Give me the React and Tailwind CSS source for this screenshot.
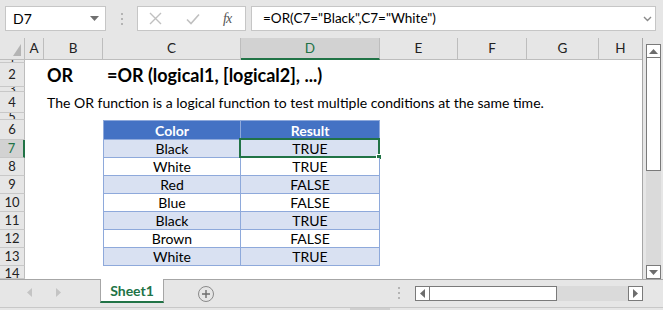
import React from 'react'

const font = { fontFamily: 'Lato, "Liberation Sans", sans-serif' }

const cols = [
  { k: 'A', w: 'w-[19px]' },
  { k: 'B', w: 'w-[59px]' },
  { k: 'C', w: 'w-[138px]' },
  { k: 'D', w: 'w-[139px]' },
  { k: 'E', w: 'w-[78px]' },
  { k: 'F', w: 'w-[69px]' },
  { k: 'G', w: 'w-[72px]' },
  { k: 'H', w: 'flex-1' },
]

const data = [
  ['Black', 'TRUE'],
  ['White', 'TRUE'],
  ['Red', 'FALSE'],
  ['Blue', 'FALSE'],
  ['Black', 'TRUE'],
  ['Brown', 'FALSE'],
  ['White', 'TRUE'],
]

const RowHead = ({ n, h, active, top }) => (
  <div
    className={
      'w-[25px] shrink-0 overflow-hidden flex justify-center border-b border-[#c8c8c8] text-[13px] leading-[15px] ' +
      h + ' ' +
      (top ? 'items-start ' : 'items-center ') +
      (active
        ? 'bg-[#d2d2d2] border-r-2 border-r-[#217346] text-[#217346]'
        : 'bg-[#e6e6e6] border-r border-r-[#bdbdbd] text-[#222]')
    }
  >
    {n}
  </div>
)

const TriUp = () => (
  <svg width="9" height="5" viewBox="0 0 9 5"><path d="M0 5 L4.5 0 L9 5 Z" fill="#6d6d6d" /></svg>
)
const TriDown = () => (
  <svg width="9" height="5" viewBox="0 0 9 5"><path d="M0 0 L4.5 5 L9 0 Z" fill="#6d6d6d" /></svg>
)
const TriLeft = ({ c = '#6d6d6d' }) => (
  <svg width="5" height="9" viewBox="0 0 5 9"><path d="M5 0 L0 4.5 L5 9 Z" fill={c} /></svg>
)
const TriRight = ({ c = '#6d6d6d' }) => (
  <svg width="5" height="9" viewBox="0 0 5 9"><path d="M0 0 L5 4.5 L0 9 Z" fill={c} /></svg>
)

const Dots = () => (
  <div className="flex flex-col gap-[3px]">
    <div className="w-[2px] h-[2px] bg-[#b4b4b4]" />
    <div className="w-[2px] h-[2px] bg-[#b4b4b4]" />
    <div className="w-[2px] h-[2px] bg-[#b4b4b4]" />
  </div>
)

export default function App() {
  return (
    <div className="w-[663px] h-[310px] bg-[#e6e6e6] overflow-hidden text-black" style={font}>
      {/* formula bar */}
      <div className="h-[38px] flex items-start pt-[6px] pl-[5px]">
        <div className="w-[101px] h-[25px] bg-white border border-[#c6c6c6] flex items-center justify-between pl-[7px] pr-[6px]">
          <span className="text-[14px]">D7</span>
          <svg width="9" height="5" viewBox="0 0 9 5"><path d="M0 0 L4.5 5 L9 0 Z" fill="#707070" /></svg>
        </div>
        <div className="w-[31px] h-[25px] flex items-center justify-center">
          <Dots />
        </div>
        <div className="w-[109px] h-[25px] bg-white border border-[#c6c6c6] flex items-center pl-[11px]">
          <svg width="13" height="13" viewBox="0 0 13 13" className="mr-[24px]">
            <path d="M1 1 L12 12 M12 1 L1 12" stroke="#c0c0c0" strokeWidth="1.4" />
          </svg>
          <svg width="14" height="12" viewBox="0 0 14 12" className="mr-[23px]">
            <path d="M1 6.5 L5 10.5 L13 1.5" stroke="#c0c0c0" strokeWidth="1.6" fill="none" />
          </svg>
          <span className="text-[14px] italic text-[#555] tracking-[-1px]" style={{ fontFamily: '"Liberation Serif", serif' }}>fx</span>
        </div>
        <div className="ml-[5px] w-[405px] h-[25px] bg-white border border-[#c6c6c6] flex items-center justify-between pl-[11px] pr-[3px]">
          <span className="text-[13.5px] whitespace-nowrap">=OR(C7="Black",C7="White")</span>
          <svg width="9" height="6" viewBox="0 0 9 6"><path d="M1 1 L4.5 4.5 L8 1" stroke="#8a8a8a" strokeWidth="1.4" fill="none" /></svg>
        </div>
      </div>

      {/* sheet + vertical scrollbar */}
      <div className="h-[241px] flex">
        <div className="w-[643px] flex flex-col border-r border-[#a6a6a6] bg-white">
          {/* column headers */}
          <div className="h-[22px] flex bg-[#e6e6e6] text-[13.5px] text-[#222]">
            <div className="w-[25px] shrink-0 border-r border-b border-[#bdbdbd] relative">
              <svg width="8" height="12" viewBox="0 0 8 12" className="absolute right-[3px] bottom-[3px]">
                <path d="M8 0 L8 12 L0 12 Z" fill="#b4b4b4" />
              </svg>
            </div>
            {cols.map((c) => (
              <div
                key={c.k}
                className={
                  'shrink-0 flex items-center justify-center ' + c.w + ' ' +
                  (c.k === 'D'
                    ? 'bg-[#d2d2d2] border-r border-r-[#bdbdbd] border-b-2 border-b-[#217346] text-[#217346]'
                    : 'border-r border-r-[#bdbdbd] border-b border-b-[#bdbdbd]') +
                  (c.k === 'H' ? ' border-r-0' : '')
                }
              >
                {c.k}
              </div>
            ))}
          </div>

          {/* row 1 */}
          <div className="flex h-[3px]">
            <RowHead n="1" h="h-[3px]" />
          </div>
          {/* row 2 */}
          <div className="flex h-[24px]">
            <RowHead n="2" h="h-[24px]" />
            <div className="w-[19px] shrink-0" />
            <div className="w-[59px] shrink-0 flex items-center pl-[3px] text-[18px] font-bold">OR</div>
            <div className="w-[138px] shrink-0 flex items-center pl-[4px] text-[18px] font-bold whitespace-nowrap">
              =OR (logical1, [logical2], ...)
            </div>
          </div>
          {/* row 3 */}
          <div className="flex h-[5px]">
            <RowHead n="3" h="h-[5px]" />
          </div>
          {/* row 4 */}
          <div className="flex h-[21px]">
            <RowHead n="4" h="h-[21px]" />
            <div className="w-[19px] shrink-0" />
            <div className="w-[59px] shrink-0 flex items-center pl-[3px] text-[14px] whitespace-nowrap">
              The OR function is a logical function to test multiple conditions at the same time.
            </div>
          </div>
          {/* row 5 */}
          <div className="flex h-[7px]">
            <RowHead n="5" h="h-[7px]" />
          </div>
          {/* row 6 table header */}
          <div className="flex h-[20px] text-[14px]">
            <RowHead n="6" h="h-[20px]" />
            <div className="w-[19px] shrink-0" />
            <div className="w-[59px] shrink-0" />
            <div className="w-[138px] shrink-0 flex items-center justify-center bg-[#4472c4] text-white font-bold border border-[#8ea9db]">
              Color
            </div>
            <div className="w-[139px] shrink-0 flex items-center justify-center bg-[#4472c4] text-white font-bold border-t border-r border-b border-[#8ea9db]">
              Result
            </div>
          </div>
          {/* data rows */}
          {data.map((r, i) => {
            const band = i % 2 === 0 ? 'bg-[#d9e1f2]' : 'bg-white'
            return (
              <div key={i} className="flex h-[18px] text-[14px]">
                <RowHead n={String(i + 7)} h="h-[18px]" active={i === 0} />
                <div className="w-[19px] shrink-0" />
                <div className="w-[59px] shrink-0" />
                <div className={'w-[138px] shrink-0 flex items-center justify-center border-l border-r border-b border-[#8ea9db] ' + band}>
                  {r[0]}
                </div>
                <div className={'w-[139px] shrink-0 flex items-center justify-center border-r border-b border-[#8ea9db] relative ' + band}>
                  {r[1]}
                  {i === 0 && (
                    <>
                      <div className="absolute -left-[2px] -top-[2px] -right-[1px] -bottom-[1px] border-2 border-[#217346]" />
                      <div className="absolute -right-[3px] -bottom-[3px] w-[6px] h-[6px] bg-[#217346] border border-white" />
                    </>
                  )}
                </div>
              </div>
            )
          })}
          {/* row 14 */}
          <div className="flex h-[13px]">
            <RowHead n="14" h="h-[13px]" top />
          </div>
        </div>

        {/* vertical scrollbar */}
        <div className="ml-[3px] w-[15px] pt-[6px] flex flex-col">
          <div className="h-[14px] border border-[#7a7a7a] bg-white flex items-center justify-center">
            <TriUp />
          </div>
          <div className="h-[113px] border border-[#7a7a7a] border-t-0 bg-white" />
          <div className="flex-1 bg-[#dadada]" />
          <div className="h-[14px] border border-[#7a7a7a] bg-white flex items-center justify-center">
            <TriDown />
          </div>
        </div>
      </div>

      {/* sheet tabs */}
      <div className="h-[28px] flex items-start border-t border-[#a6a6a6]">
        <div className="w-[100px] h-[24px] flex items-center pl-[27px] gap-[24px]">
          <TriLeft c="#c4c4c4" />
          <TriRight c="#c4c4c4" />
        </div>
        <div className="w-[64px] h-[24px] -mt-[1px] bg-white border-l border-r border-[#a6a6a6] border-b-2 border-b-[#217346] flex items-center justify-center text-[14px] font-bold text-[#217346]">
          Sheet1
        </div>
        <div className="ml-[34px] mt-[6px] w-[16px] h-[16px] rounded-full border border-[#8a8a8a] flex items-center justify-center">
          <svg width="8" height="8" viewBox="0 0 8 8"><path d="M4 0 V8 M0 4 H8" stroke="#6d6d6d" strokeWidth="1.4" /></svg>
        </div>
        <div className="ml-[184px] mt-[7px]">
          <Dots />
        </div>
        <div className="ml-[15px] mt-[6px] h-[15px] flex">
          <div className="w-[15px] border border-[#7a7a7a] bg-white flex items-center justify-center">
            <TriLeft />
          </div>
          <div className="w-[127px] border-t border-b border-r border-[#7a7a7a] bg-white" />
          <div className="w-[71px] bg-[#dadada]" />
          <div className="w-[15px] border border-[#7a7a7a] bg-white flex items-center justify-center">
            <TriRight />
          </div>
        </div>
      </div>

      {/* bottom strip */}
      <div className="h-[3px] border-t border-[#c8c8c8] flex">
        <div className="ml-[350px] w-[40px] h-full bg-[#cfcfcf]" />
      </div>
    </div>
  )
}
